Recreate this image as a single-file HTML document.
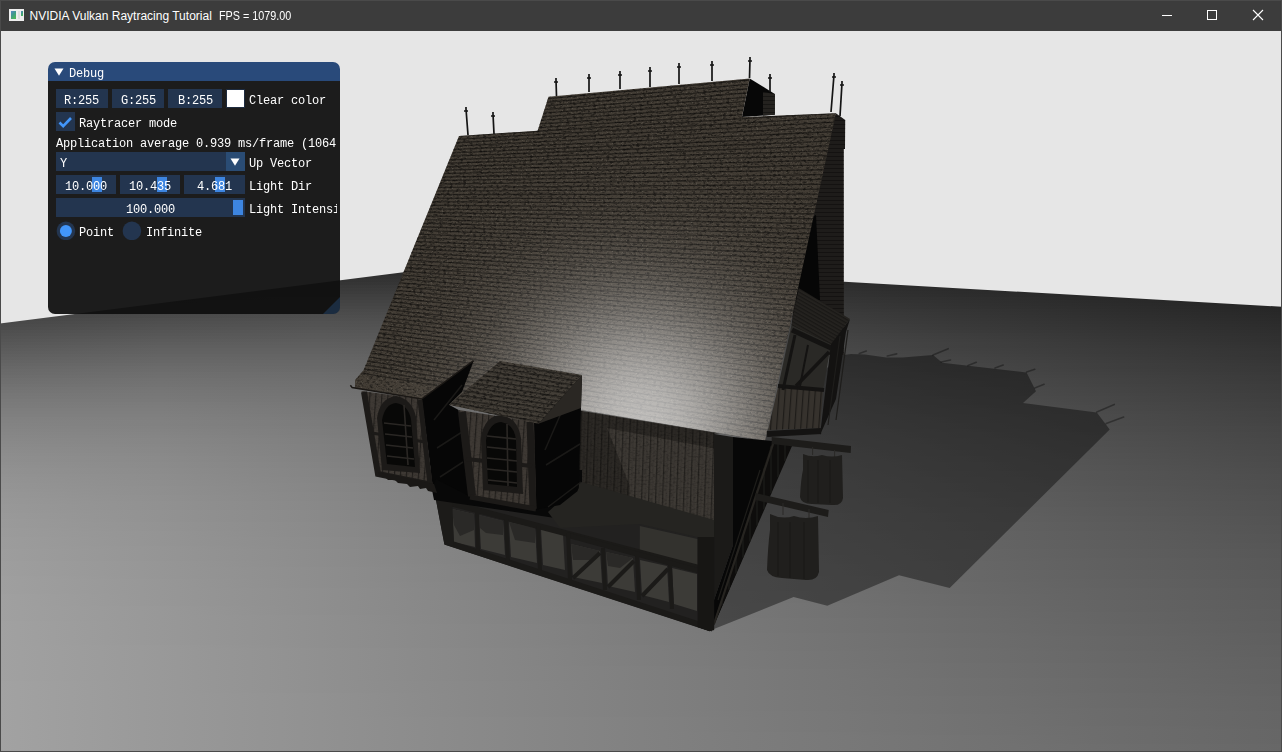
<!DOCTYPE html>
<html><head><meta charset="utf-8">
<style>
html,body{margin:0;padding:0;width:1282px;height:752px;overflow:hidden;background:#e6e6e6;position:relative;}
#floor{position:absolute;left:0;top:0;width:1282px;height:752px;clip-path:polygon(0px 323.6px,488px 261.5px,1282px 306.7px,1282px 752px,0px 752px);}
#floor i{position:absolute;left:0;width:1282px;height:3px;display:block;}
#scene{position:absolute;left:0;top:0;}
#titlebar{position:absolute;left:0;top:0;width:1282px;height:31px;background:#3c3c3c;}
#title,#title2{position:absolute;left:29.5px;top:10px;color:#fff;font:12px/13px "Liberation Sans",sans-serif;white-space:pre;}
#title2{left:218.5px;transform:scaleX(0.9);transform-origin:0 0;}
.tb{position:absolute;}
#border{position:absolute;left:0;top:0;width:1280px;height:750px;border:1px solid #4a4a4a;pointer-events:none;}
#panel{position:absolute;left:48px;top:62px;width:292px;height:252px;border-radius:7px;overflow:hidden;will-change:transform;font:12px/13px "Liberation Mono",monospace;letter-spacing:-0.2px;color:#fff;}
#panel .tbar{position:absolute;left:0;top:0;width:292px;height:19px;background:#294a7a;}
#panel .body{position:absolute;left:0;top:19px;width:292px;height:233px;background:rgba(15,15,15,0.94);}
.fr{position:absolute;height:19px;background:rgba(41,74,122,0.54);}
.t{position:absolute;white-space:pre;}
.grab{position:absolute;background:#3d85e0;}
</style></head>
<body>
<div id="floor">
<i style="top:258px;background:linear-gradient(90deg,#1a1a1a,#1e1e1e,#222222,#242424,#232323,#202020,#1c1c1c,#181818,#151515)"></i>
<i style="top:261px;background:linear-gradient(90deg,#1c1c1c,#212121,#252525,#272727,#252525,#222222,#1d1d1d,#191919,#161616)"></i>
<i style="top:264px;background:linear-gradient(90deg,#1e1e1e,#232323,#272727,#292929,#272727,#242424,#1f1f1f,#1b1b1b,#171717)"></i>
<i style="top:267px;background:linear-gradient(90deg,#202020,#252525,#292929,#2b2b2b,#2a2a2a,#252525,#202020,#1c1c1c,#181818)"></i>
<i style="top:270px;background:linear-gradient(90deg,#222222,#282828,#2c2c2c,#2e2e2e,#2c2c2c,#272727,#222222,#1d1d1d,#191919)"></i>
<i style="top:273px;background:linear-gradient(90deg,#252525,#2a2a2a,#2e2e2e,#303030,#2e2e2e,#292929,#242424,#1f1f1f,#1a1a1a)"></i>
<i style="top:276px;background:linear-gradient(90deg,#272727,#2c2c2c,#313131,#323232,#303030,#2b2b2b,#252525,#202020,#1c1c1c)"></i>
<i style="top:279px;background:linear-gradient(90deg,#292929,#2f2f2f,#333333,#343434,#323232,#2c2c2c,#262626,#212121,#1d1d1d)"></i>
<i style="top:282px;background:linear-gradient(90deg,#2b2b2b,#313131,#353535,#363636,#333333,#2e2e2e,#282828,#222222,#1e1e1e)"></i>
<i style="top:285px;background:linear-gradient(90deg,#2d2d2d,#333333,#383838,#393939,#353535,#303030,#292929,#242424,#1f1f1f)"></i>
<i style="top:288px;background:linear-gradient(90deg,#2f2f2f,#363636,#3a3a3a,#3b3b3b,#373737,#313131,#2b2b2b,#252525,#202020)"></i>
<i style="top:291px;background:linear-gradient(90deg,#323232,#383838,#3c3c3c,#3d3d3d,#393939,#333333,#2c2c2c,#262626,#212121)"></i>
<i style="top:294px;background:linear-gradient(90deg,#343434,#3a3a3a,#3f3f3f,#3f3f3f,#3b3b3b,#343434,#2d2d2d,#272727,#222222)"></i>
<i style="top:297px;background:linear-gradient(90deg,#363636,#3d3d3d,#414141,#414141,#3c3c3c,#363636,#2f2f2f,#282828,#232323)"></i>
<i style="top:300px;background:linear-gradient(90deg,#383838,#3f3f3f,#434343,#434343,#3e3e3e,#373737,#303030,#2a2a2a,#242424)"></i>
<i style="top:303px;background:linear-gradient(90deg,#3b3b3b,#414141,#454545,#454545,#404040,#393939,#313131,#2b2b2b,#252525)"></i>
<i style="top:306px;background:linear-gradient(90deg,#3d3d3d,#444444,#474747,#474747,#414141,#3a3a3a,#323232,#2c2c2c,#262626)"></i>
<i style="top:309px;background:linear-gradient(90deg,#3f3f3f,#464646,#4a4a4a,#484848,#434343,#3b3b3b,#343434,#2d2d2d,#272727)"></i>
<i style="top:312px;background:linear-gradient(90deg,#414141,#484848,#4c4c4c,#4a4a4a,#444444,#3d3d3d,#353535,#2e2e2e,#282828)"></i>
<i style="top:315px;background:linear-gradient(90deg,#444444,#4a4a4a,#4e4e4e,#4c4c4c,#464646,#3e3e3e,#363636,#2f2f2f,#292929)"></i>
<i style="top:318px;background:linear-gradient(90deg,#464646,#4d4d4d,#505050,#4d4d4d,#474747,#3f3f3f,#373737,#303030,#2a2a2a)"></i>
<i style="top:321px;background:linear-gradient(90deg,#484848,#4f4f4f,#525252,#4f4f4f,#494949,#404040,#383838,#313131,#2b2b2b)"></i>
<i style="top:324px;background:linear-gradient(90deg,#4a4a4a,#515151,#535353,#515151,#4a4a4a,#424242,#393939,#323232,#2c2c2c)"></i>
<i style="top:327px;background:linear-gradient(90deg,#4c4c4c,#535353,#555555,#525252,#4b4b4b,#434343,#3a3a3a,#333333,#2d2d2d)"></i>
<i style="top:330px;background:linear-gradient(90deg,#4f4f4f,#555555,#575757,#545454,#4d4d4d,#444444,#3b3b3b,#343434,#2e2e2e)"></i>
<i style="top:333px;background:linear-gradient(90deg,#515151,#575757,#595959,#555555,#4e4e4e,#454545,#3d3d3d,#353535,#2f2f2f)"></i>
<i style="top:336px;background:linear-gradient(90deg,#535353,#595959,#5a5a5a,#575757,#4f4f4f,#464646,#3e3e3e,#363636,#303030)"></i>
<i style="top:339px;background:linear-gradient(90deg,#555555,#5b5b5b,#5c5c5c,#585858,#505050,#474747,#3f3f3f,#373737,#303030)"></i>
<i style="top:342px;background:linear-gradient(90deg,#575757,#5d5d5d,#5e5e5e,#595959,#515151,#484848,#404040,#383838,#313131)"></i>
<i style="top:345px;background:linear-gradient(90deg,#595959,#5f5f5f,#5f5f5f,#5b5b5b,#535353,#494949,#404040,#393939,#323232)"></i>
<i style="top:348px;background:linear-gradient(90deg,#5b5b5b,#616161,#616161,#5c5c5c,#545454,#4a4a4a,#414141,#3a3a3a,#333333)"></i>
<i style="top:351px;background:linear-gradient(90deg,#5d5d5d,#626262,#626262,#5d5d5d,#555555,#4b4b4b,#424242,#3a3a3a,#343434)"></i>
<i style="top:354px;background:linear-gradient(90deg,#5f5f5f,#646464,#646464,#5e5e5e,#565656,#4c4c4c,#434343,#3b3b3b,#343434)"></i>
<i style="top:357px;background:linear-gradient(90deg,#616161,#666666,#656565,#606060,#575757,#4d4d4d,#444444,#3c3c3c,#353535)"></i>
<i style="top:360px;background:linear-gradient(90deg,#636363,#676767,#676767,#616161,#585858,#4e4e4e,#454545,#3d3d3d,#363636)"></i>
<i style="top:363px;background:linear-gradient(90deg,#656565,#696969,#686868,#626262,#595959,#4f4f4f,#464646,#3e3e3e,#373737)"></i>
<i style="top:366px;background:linear-gradient(90deg,#676767,#6b6b6b,#696969,#636363,#5a5a5a,#505050,#474747,#3e3e3e,#383838)"></i>
<i style="top:369px;background:linear-gradient(90deg,#696969,#6c6c6c,#6a6a6a,#646464,#5b5b5b,#515151,#474747,#3f3f3f,#383838)"></i>
<i style="top:372px;background:linear-gradient(90deg,#6a6a6a,#6e6e6e,#6c6c6c,#656565,#5c5c5c,#525252,#484848,#404040,#393939)"></i>
<i style="top:375px;background:linear-gradient(90deg,#6c6c6c,#6f6f6f,#6d6d6d,#666666,#5c5c5c,#525252,#494949,#414141,#3a3a3a)"></i>
<i style="top:378px;background:linear-gradient(90deg,#6e6e6e,#717171,#6e6e6e,#676767,#5d5d5d,#535353,#4a4a4a,#424242,#3a3a3a)"></i>
<i style="top:381px;background:linear-gradient(90deg,#6f6f6f,#727272,#6f6f6f,#686868,#5e5e5e,#545454,#4b4b4b,#424242,#3b3b3b)"></i>
<i style="top:384px;background:linear-gradient(90deg,#717171,#737373,#707070,#696969,#5f5f5f,#555555,#4b4b4b,#434343,#3c3c3c)"></i>
<i style="top:387px;background:linear-gradient(90deg,#737373,#757575,#717171,#6a6a6a,#606060,#565656,#4c4c4c,#444444,#3c3c3c)"></i>
<i style="top:390px;background:linear-gradient(90deg,#747474,#767676,#727272,#6a6a6a,#606060,#565656,#4d4d4d,#444444,#3d3d3d)"></i>
<i style="top:393px;background:linear-gradient(90deg,#767676,#777777,#737373,#6b6b6b,#616161,#575757,#4d4d4d,#454545,#3e3e3e)"></i>
<i style="top:396px;background:linear-gradient(90deg,#777777,#787878,#747474,#6c6c6c,#626262,#585858,#4e4e4e,#464646,#3e3e3e)"></i>
<i style="top:399px;background:linear-gradient(90deg,#797979,#797979,#757575,#6d6d6d,#636363,#585858,#4f4f4f,#464646,#3f3f3f)"></i>
<i style="top:402px;background:linear-gradient(90deg,#7a7a7a,#7b7b7b,#767676,#6e6e6e,#636363,#595959,#4f4f4f,#474747,#404040)"></i>
<i style="top:405px;background:linear-gradient(90deg,#7b7b7b,#7c7c7c,#777777,#6e6e6e,#646464,#5a5a5a,#505050,#484848,#404040)"></i>
<i style="top:408px;background:linear-gradient(90deg,#7d7d7d,#7d7d7d,#787878,#6f6f6f,#656565,#5a5a5a,#515151,#484848,#414141)"></i>
<i style="top:411px;background:linear-gradient(90deg,#7e7e7e,#7e7e7e,#787878,#707070,#656565,#5b5b5b,#515151,#494949,#424242)"></i>
<i style="top:414px;background:linear-gradient(90deg,#7f7f7f,#7f7f7f,#797979,#707070,#666666,#5c5c5c,#525252,#4a4a4a,#424242)"></i>
<i style="top:417px;background:linear-gradient(90deg,#818181,#808080,#7a7a7a,#717171,#676767,#5c5c5c,#535353,#4a4a4a,#434343)"></i>
<i style="top:420px;background:linear-gradient(90deg,#828282,#818181,#7b7b7b,#727272,#676767,#5d5d5d,#535353,#4b4b4b,#434343)"></i>
<i style="top:423px;background:linear-gradient(90deg,#838383,#818181,#7b7b7b,#727272,#686868,#5d5d5d,#545454,#4b4b4b,#444444)"></i>
<i style="top:426px;background:linear-gradient(90deg,#848484,#828282,#7c7c7c,#737373,#686868,#5e5e5e,#545454,#4c4c4c,#454545)"></i>
<i style="top:429px;background:linear-gradient(90deg,#858585,#838383,#7d7d7d,#737373,#696969,#5f5f5f,#555555,#4c4c4c,#454545)"></i>
<i style="top:432px;background:linear-gradient(90deg,#868686,#848484,#7d7d7d,#747474,#696969,#5f5f5f,#565656,#4d4d4d,#464646)"></i>
<i style="top:435px;background:linear-gradient(90deg,#878787,#858585,#7e7e7e,#747474,#6a6a6a,#606060,#565656,#4e4e4e,#464646)"></i>
<i style="top:438px;background:linear-gradient(90deg,#888888,#868686,#7f7f7f,#757575,#6a6a6a,#606060,#575757,#4e4e4e,#474747)"></i>
<i style="top:441px;background:linear-gradient(90deg,#898989,#868686,#7f7f7f,#767676,#6b6b6b,#616161,#575757,#4f4f4f,#474747)"></i>
<i style="top:444px;background:linear-gradient(90deg,#8a8a8a,#878787,#808080,#767676,#6b6b6b,#616161,#585858,#4f4f4f,#484848)"></i>
<i style="top:447px;background:linear-gradient(90deg,#8b8b8b,#888888,#808080,#777777,#6c6c6c,#626262,#585858,#505050,#484848)"></i>
<i style="top:450px;background:linear-gradient(90deg,#8c8c8c,#888888,#818181,#777777,#6c6c6c,#626262,#595959,#505050,#494949)"></i>
<i style="top:453px;background:linear-gradient(90deg,#8d8d8d,#898989,#818181,#777777,#6d6d6d,#636363,#595959,#515151,#494949)"></i>
<i style="top:456px;background:linear-gradient(90deg,#8e8e8e,#8a8a8a,#828282,#787878,#6d6d6d,#636363,#5a5a5a,#515151,#4a4a4a)"></i>
<i style="top:459px;background:linear-gradient(90deg,#8e8e8e,#8a8a8a,#828282,#787878,#6e6e6e,#646464,#5a5a5a,#525252,#4a4a4a)"></i>
<i style="top:462px;background:linear-gradient(90deg,#8f8f8f,#8b8b8b,#838383,#797979,#6e6e6e,#646464,#5b5b5b,#525252,#4b4b4b)"></i>
<i style="top:465px;background:linear-gradient(90deg,#909090,#8b8b8b,#838383,#797979,#6f6f6f,#646464,#5b5b5b,#535353,#4b4b4b)"></i>
<i style="top:468px;background:linear-gradient(90deg,#919191,#8c8c8c,#848484,#7a7a7a,#6f6f6f,#656565,#5b5b5b,#535353,#4c4c4c)"></i>
<i style="top:471px;background:linear-gradient(90deg,#919191,#8c8c8c,#848484,#7a7a7a,#6f6f6f,#656565,#5c5c5c,#545454,#4c4c4c)"></i>
<i style="top:474px;background:linear-gradient(90deg,#929292,#8d8d8d,#848484,#7a7a7a,#707070,#666666,#5c5c5c,#545454,#4d4d4d)"></i>
<i style="top:477px;background:linear-gradient(90deg,#939393,#8d8d8d,#858585,#7b7b7b,#707070,#666666,#5d5d5d,#545454,#4d4d4d)"></i>
<i style="top:480px;background:linear-gradient(90deg,#939393,#8e8e8e,#858585,#7b7b7b,#717171,#676767,#5d5d5d,#555555,#4e4e4e)"></i>
<i style="top:483px;background:linear-gradient(90deg,#949494,#8e8e8e,#868686,#7c7c7c,#717171,#676767,#5e5e5e,#555555,#4e4e4e)"></i>
<i style="top:486px;background:linear-gradient(90deg,#949494,#8f8f8f,#868686,#7c7c7c,#717171,#676767,#5e5e5e,#565656,#4e4e4e)"></i>
<i style="top:489px;background:linear-gradient(90deg,#959595,#8f8f8f,#868686,#7c7c7c,#727272,#686868,#5e5e5e,#565656,#4f4f4f)"></i>
<i style="top:492px;background:linear-gradient(90deg,#969696,#8f8f8f,#878787,#7d7d7d,#727272,#686868,#5f5f5f,#575757,#4f4f4f)"></i>
<i style="top:495px;background:linear-gradient(90deg,#969696,#909090,#878787,#7d7d7d,#727272,#686868,#5f5f5f,#575757,#505050)"></i>
<i style="top:498px;background:linear-gradient(90deg,#979797,#909090,#878787,#7d7d7d,#737373,#696969,#606060,#575757,#505050)"></i>
<i style="top:501px;background:linear-gradient(90deg,#979797,#919191,#888888,#7d7d7d,#737373,#696969,#606060,#585858,#515151)"></i>
<i style="top:504px;background:linear-gradient(90deg,#989898,#919191,#888888,#7e7e7e,#737373,#6a6a6a,#606060,#585858,#515151)"></i>
<i style="top:507px;background:linear-gradient(90deg,#989898,#919191,#888888,#7e7e7e,#747474,#6a6a6a,#616161,#595959,#515151)"></i>
<i style="top:510px;background:linear-gradient(90deg,#989898,#929292,#898989,#7e7e7e,#747474,#6a6a6a,#616161,#595959,#525252)"></i>
<i style="top:513px;background:linear-gradient(90deg,#999999,#929292,#898989,#7f7f7f,#747474,#6b6b6b,#626262,#595959,#525252)"></i>
<i style="top:516px;background:linear-gradient(90deg,#999999,#929292,#898989,#7f7f7f,#757575,#6b6b6b,#626262,#5a5a5a,#535353)"></i>
<i style="top:519px;background:linear-gradient(90deg,#9a9a9a,#929292,#898989,#7f7f7f,#757575,#6b6b6b,#626262,#5a5a5a,#535353)"></i>
<i style="top:522px;background:linear-gradient(90deg,#9a9a9a,#939393,#8a8a8a,#7f7f7f,#757575,#6c6c6c,#636363,#5b5b5b,#535353)"></i>
<i style="top:525px;background:linear-gradient(90deg,#9a9a9a,#939393,#8a8a8a,#808080,#767676,#6c6c6c,#636363,#5b5b5b,#545454)"></i>
<i style="top:528px;background:linear-gradient(90deg,#9b9b9b,#939393,#8a8a8a,#808080,#767676,#6c6c6c,#636363,#5b5b5b,#545454)"></i>
<i style="top:531px;background:linear-gradient(90deg,#9b9b9b,#949494,#8a8a8a,#808080,#767676,#6c6c6c,#646464,#5c5c5c,#545454)"></i>
<i style="top:534px;background:linear-gradient(90deg,#9b9b9b,#949494,#8a8a8a,#808080,#767676,#6d6d6d,#646464,#5c5c5c,#555555)"></i>
<i style="top:537px;background:linear-gradient(90deg,#9c9c9c,#949494,#8b8b8b,#818181,#777777,#6d6d6d,#646464,#5c5c5c,#555555)"></i>
<i style="top:540px;background:linear-gradient(90deg,#9c9c9c,#949494,#8b8b8b,#818181,#777777,#6d6d6d,#656565,#5d5d5d,#555555)"></i>
<i style="top:543px;background:linear-gradient(90deg,#9c9c9c,#949494,#8b8b8b,#818181,#777777,#6e6e6e,#656565,#5d5d5d,#565656)"></i>
<i style="top:546px;background:linear-gradient(90deg,#9c9c9c,#959595,#8b8b8b,#818181,#777777,#6e6e6e,#656565,#5d5d5d,#565656)"></i>
<i style="top:549px;background:linear-gradient(90deg,#9d9d9d,#959595,#8c8c8c,#828282,#787878,#6e6e6e,#666666,#5e5e5e,#575757)"></i>
<i style="top:552px;background:linear-gradient(90deg,#9d9d9d,#959595,#8c8c8c,#828282,#787878,#6e6e6e,#666666,#5e5e5e,#575757)"></i>
<i style="top:555px;background:linear-gradient(90deg,#9d9d9d,#959595,#8c8c8c,#828282,#787878,#6f6f6f,#666666,#5e5e5e,#575757)"></i>
<i style="top:558px;background:linear-gradient(90deg,#9d9d9d,#959595,#8c8c8c,#828282,#787878,#6f6f6f,#666666,#5f5f5f,#585858)"></i>
<i style="top:561px;background:linear-gradient(90deg,#9e9e9e,#969696,#8c8c8c,#828282,#797979,#6f6f6f,#676767,#5f5f5f,#585858)"></i>
<i style="top:564px;background:linear-gradient(90deg,#9e9e9e,#969696,#8c8c8c,#838383,#797979,#707070,#676767,#5f5f5f,#585858)"></i>
<i style="top:567px;background:linear-gradient(90deg,#9e9e9e,#969696,#8d8d8d,#838383,#797979,#707070,#676767,#5f5f5f,#585858)"></i>
<i style="top:570px;background:linear-gradient(90deg,#9e9e9e,#969696,#8d8d8d,#838383,#797979,#707070,#686868,#606060,#595959)"></i>
<i style="top:573px;background:linear-gradient(90deg,#9e9e9e,#969696,#8d8d8d,#838383,#797979,#707070,#686868,#606060,#595959)"></i>
<i style="top:576px;background:linear-gradient(90deg,#9f9f9f,#969696,#8d8d8d,#838383,#7a7a7a,#717171,#686868,#606060,#595959)"></i>
<i style="top:579px;background:linear-gradient(90deg,#9f9f9f,#979797,#8d8d8d,#838383,#7a7a7a,#717171,#686868,#616161,#5a5a5a)"></i>
<i style="top:582px;background:linear-gradient(90deg,#9f9f9f,#979797,#8d8d8d,#848484,#7a7a7a,#717171,#696969,#616161,#5a5a5a)"></i>
<i style="top:585px;background:linear-gradient(90deg,#9f9f9f,#979797,#8d8d8d,#848484,#7a7a7a,#717171,#696969,#616161,#5a5a5a)"></i>
<i style="top:588px;background:linear-gradient(90deg,#9f9f9f,#979797,#8e8e8e,#848484,#7a7a7a,#717171,#696969,#626262,#5b5b5b)"></i>
<i style="top:591px;background:linear-gradient(90deg,#9f9f9f,#979797,#8e8e8e,#848484,#7b7b7b,#727272,#696969,#626262,#5b5b5b)"></i>
<i style="top:594px;background:linear-gradient(90deg,#a0a0a0,#979797,#8e8e8e,#848484,#7b7b7b,#727272,#6a6a6a,#626262,#5b5b5b)"></i>
<i style="top:597px;background:linear-gradient(90deg,#a0a0a0,#979797,#8e8e8e,#848484,#7b7b7b,#727272,#6a6a6a,#626262,#5b5b5b)"></i>
<i style="top:600px;background:linear-gradient(90deg,#a0a0a0,#979797,#8e8e8e,#858585,#7b7b7b,#727272,#6a6a6a,#636363,#5c5c5c)"></i>
<i style="top:603px;background:linear-gradient(90deg,#a0a0a0,#979797,#8e8e8e,#858585,#7b7b7b,#737373,#6a6a6a,#636363,#5c5c5c)"></i>
<i style="top:606px;background:linear-gradient(90deg,#a0a0a0,#989898,#8e8e8e,#858585,#7c7c7c,#737373,#6b6b6b,#636363,#5c5c5c)"></i>
<i style="top:609px;background:linear-gradient(90deg,#a0a0a0,#989898,#8e8e8e,#858585,#7c7c7c,#737373,#6b6b6b,#636363,#5d5d5d)"></i>
<i style="top:612px;background:linear-gradient(90deg,#a0a0a0,#989898,#8e8e8e,#858585,#7c7c7c,#737373,#6b6b6b,#646464,#5d5d5d)"></i>
<i style="top:615px;background:linear-gradient(90deg,#a0a0a0,#989898,#8f8f8f,#858585,#7c7c7c,#737373,#6b6b6b,#646464,#5d5d5d)"></i>
<i style="top:618px;background:linear-gradient(90deg,#a0a0a0,#989898,#8f8f8f,#858585,#7c7c7c,#747474,#6c6c6c,#646464,#5d5d5d)"></i>
<i style="top:621px;background:linear-gradient(90deg,#a1a1a1,#989898,#8f8f8f,#858585,#7c7c7c,#747474,#6c6c6c,#646464,#5e5e5e)"></i>
<i style="top:624px;background:linear-gradient(90deg,#a1a1a1,#989898,#8f8f8f,#868686,#7d7d7d,#747474,#6c6c6c,#656565,#5e5e5e)"></i>
<i style="top:627px;background:linear-gradient(90deg,#a1a1a1,#989898,#8f8f8f,#868686,#7d7d7d,#747474,#6c6c6c,#656565,#5e5e5e)"></i>
<i style="top:630px;background:linear-gradient(90deg,#a1a1a1,#989898,#8f8f8f,#868686,#7d7d7d,#747474,#6c6c6c,#656565,#5e5e5e)"></i>
<i style="top:633px;background:linear-gradient(90deg,#a1a1a1,#989898,#8f8f8f,#868686,#7d7d7d,#757575,#6d6d6d,#656565,#5f5f5f)"></i>
<i style="top:636px;background:linear-gradient(90deg,#a1a1a1,#989898,#8f8f8f,#868686,#7d7d7d,#757575,#6d6d6d,#666666,#5f5f5f)"></i>
<i style="top:639px;background:linear-gradient(90deg,#a1a1a1,#989898,#8f8f8f,#868686,#7d7d7d,#757575,#6d6d6d,#666666,#5f5f5f)"></i>
<i style="top:642px;background:linear-gradient(90deg,#a1a1a1,#989898,#8f8f8f,#868686,#7d7d7d,#757575,#6d6d6d,#666666,#5f5f5f)"></i>
<i style="top:645px;background:linear-gradient(90deg,#a1a1a1,#999999,#8f8f8f,#868686,#7e7e7e,#757575,#6d6d6d,#666666,#606060)"></i>
<i style="top:648px;background:linear-gradient(90deg,#a1a1a1,#999999,#909090,#878787,#7e7e7e,#757575,#6e6e6e,#666666,#606060)"></i>
<i style="top:651px;background:linear-gradient(90deg,#a1a1a1,#999999,#909090,#878787,#7e7e7e,#767676,#6e6e6e,#676767,#606060)"></i>
<i style="top:654px;background:linear-gradient(90deg,#a1a1a1,#999999,#909090,#878787,#7e7e7e,#767676,#6e6e6e,#676767,#606060)"></i>
<i style="top:657px;background:linear-gradient(90deg,#a1a1a1,#999999,#909090,#878787,#7e7e7e,#767676,#6e6e6e,#676767,#616161)"></i>
<i style="top:660px;background:linear-gradient(90deg,#a1a1a1,#999999,#909090,#878787,#7e7e7e,#767676,#6e6e6e,#676767,#616161)"></i>
<i style="top:663px;background:linear-gradient(90deg,#a1a1a1,#999999,#909090,#878787,#7e7e7e,#767676,#6f6f6f,#686868,#616161)"></i>
<i style="top:666px;background:linear-gradient(90deg,#a1a1a1,#999999,#909090,#878787,#7f7f7f,#767676,#6f6f6f,#686868,#616161)"></i>
<i style="top:669px;background:linear-gradient(90deg,#a1a1a1,#999999,#909090,#878787,#7f7f7f,#777777,#6f6f6f,#686868,#626262)"></i>
<i style="top:672px;background:linear-gradient(90deg,#a1a1a1,#999999,#909090,#878787,#7f7f7f,#777777,#6f6f6f,#686868,#626262)"></i>
<i style="top:675px;background:linear-gradient(90deg,#a1a1a1,#999999,#909090,#878787,#7f7f7f,#777777,#6f6f6f,#686868,#626262)"></i>
<i style="top:678px;background:linear-gradient(90deg,#a1a1a1,#999999,#909090,#878787,#7f7f7f,#777777,#707070,#696969,#626262)"></i>
<i style="top:681px;background:linear-gradient(90deg,#a2a2a2,#999999,#909090,#888888,#7f7f7f,#777777,#707070,#696969,#626262)"></i>
<i style="top:684px;background:linear-gradient(90deg,#a2a2a2,#999999,#909090,#888888,#7f7f7f,#777777,#707070,#696969,#636363)"></i>
<i style="top:687px;background:linear-gradient(90deg,#a2a2a2,#999999,#909090,#888888,#7f7f7f,#777777,#707070,#696969,#636363)"></i>
<i style="top:690px;background:linear-gradient(90deg,#a2a2a2,#999999,#909090,#888888,#808080,#787878,#707070,#696969,#636363)"></i>
<i style="top:693px;background:linear-gradient(90deg,#a2a2a2,#999999,#919191,#888888,#808080,#787878,#707070,#6a6a6a,#636363)"></i>
<i style="top:696px;background:linear-gradient(90deg,#a2a2a2,#999999,#919191,#888888,#808080,#787878,#717171,#6a6a6a,#646464)"></i>
<i style="top:699px;background:linear-gradient(90deg,#a2a2a2,#999999,#919191,#888888,#808080,#787878,#717171,#6a6a6a,#646464)"></i>
<i style="top:702px;background:linear-gradient(90deg,#a2a2a2,#999999,#919191,#888888,#808080,#787878,#717171,#6a6a6a,#646464)"></i>
<i style="top:705px;background:linear-gradient(90deg,#a2a2a2,#999999,#919191,#888888,#808080,#787878,#717171,#6a6a6a,#646464)"></i>
<i style="top:708px;background:linear-gradient(90deg,#a2a2a2,#999999,#919191,#888888,#808080,#787878,#717171,#6b6b6b,#646464)"></i>
<i style="top:711px;background:linear-gradient(90deg,#a2a2a2,#999999,#919191,#888888,#808080,#797979,#717171,#6b6b6b,#656565)"></i>
<i style="top:714px;background:linear-gradient(90deg,#a2a2a2,#999999,#919191,#888888,#808080,#797979,#727272,#6b6b6b,#656565)"></i>
<i style="top:717px;background:linear-gradient(90deg,#a2a2a2,#999999,#919191,#898989,#818181,#797979,#727272,#6b6b6b,#656565)"></i>
<i style="top:720px;background:linear-gradient(90deg,#a2a2a2,#999999,#919191,#898989,#818181,#797979,#727272,#6b6b6b,#656565)"></i>
<i style="top:723px;background:linear-gradient(90deg,#a2a2a2,#999999,#919191,#898989,#818181,#797979,#727272,#6b6b6b,#656565)"></i>
<i style="top:726px;background:linear-gradient(90deg,#a2a2a2,#999999,#919191,#898989,#818181,#797979,#727272,#6c6c6c,#656565)"></i>
<i style="top:729px;background:linear-gradient(90deg,#a2a2a2,#999999,#919191,#898989,#818181,#797979,#727272,#6c6c6c,#666666)"></i>
<i style="top:732px;background:linear-gradient(90deg,#a2a2a2,#999999,#919191,#898989,#818181,#7a7a7a,#727272,#6c6c6c,#666666)"></i>
<i style="top:735px;background:linear-gradient(90deg,#a2a2a2,#999999,#919191,#898989,#818181,#7a7a7a,#737373,#6c6c6c,#666666)"></i>
<i style="top:738px;background:linear-gradient(90deg,#a2a2a2,#999999,#919191,#898989,#818181,#7a7a7a,#737373,#6c6c6c,#666666)"></i>
<i style="top:741px;background:linear-gradient(90deg,#a2a2a2,#999999,#919191,#898989,#818181,#7a7a7a,#737373,#6c6c6c,#666666)"></i>
<i style="top:744px;background:linear-gradient(90deg,#a2a2a2,#999999,#919191,#898989,#818181,#7a7a7a,#737373,#6d6d6d,#676767)"></i>
<i style="top:747px;background:linear-gradient(90deg,#a2a2a2,#999999,#919191,#898989,#818181,#7a7a7a,#737373,#6d6d6d,#676767)"></i>
<i style="top:750px;background:linear-gradient(90deg,#a1a1a1,#999999,#919191,#898989,#828282,#7a7a7a,#737373,#6d6d6d,#676767)"></i>
</div>
<svg id="scene" width="1282" height="752" viewBox="0 0 1282 752">
<defs>
  <radialGradient id="spec" gradientUnits="userSpaceOnUse" cx="640.2" cy="429.6" r="320" gradientTransform="translate(640.2 429.6) rotate(28.0) scale(1.024 0.976) translate(-640.2 -429.6)">
<stop offset="0" stop-color="#fff" stop-opacity="0.667"/>
<stop offset="0.0625" stop-color="#fff" stop-opacity="0.655"/>
<stop offset="0.125" stop-color="#fff" stop-opacity="0.616"/>
<stop offset="0.1875" stop-color="#fff" stop-opacity="0.552"/>
<stop offset="0.25" stop-color="#fff" stop-opacity="0.470"/>
<stop offset="0.3125" stop-color="#fff" stop-opacity="0.380"/>
<stop offset="0.375" stop-color="#fff" stop-opacity="0.291"/>
<stop offset="0.4375" stop-color="#fff" stop-opacity="0.211"/>
<stop offset="0.5" stop-color="#fff" stop-opacity="0.144"/>
<stop offset="0.5625" stop-color="#fff" stop-opacity="0.093"/>
<stop offset="0.625" stop-color="#fff" stop-opacity="0.057"/>
<stop offset="0.6875" stop-color="#fff" stop-opacity="0.033"/>
<stop offset="0.75" stop-color="#fff" stop-opacity="0.018"/>
<stop offset="0.8125" stop-color="#fff" stop-opacity="0.009"/>
<stop offset="0.875" stop-color="#fff" stop-opacity="0.004"/>
<stop offset="0.9375" stop-color="#fff" stop-opacity="0.002"/>
<stop offset="1" stop-color="#fff" stop-opacity="0.001"/>
</radialGradient>
  <filter id="grain" x="0" y="0" width="100%" height="100%" filterUnits="objectBoundingBox">
    <feTurbulence type="fractalNoise" baseFrequency="0.3 0.55" numOctaves="3" seed="7" result="n"/>
    <feColorMatrix in="n" type="matrix" values="0 0 0 0 0  0 0 0 0 0  0 0 0 0 0  0 0 0 -3 1.6" result="a"/>
    <feComposite in="a" in2="SourceGraphic" operator="in"/>
  </filter>
  <filter id="grainL" x="0" y="0" width="100%" height="100%" filterUnits="objectBoundingBox">
    <feTurbulence type="fractalNoise" baseFrequency="0.8 1.0" numOctaves="1" seed="11" result="n"/>
    <feColorMatrix in="n" type="matrix" values="0 0 0 0 0.85  0 0 0 0 0.8  0 0 0 0 0.68  0 0 0 4 -2.3" result="a"/>
    <feComposite in="a" in2="SourceGraphic" operator="in"/>
  </filter>
  <pattern id="shingleS" patternUnits="userSpaceOnUse" width="60" height="4.6" patternTransform="rotate(9)">
    <rect x="0" y="0" width="60" height="1.4" fill="#000" fill-opacity="0.45"/>
  </pattern>
  <pattern id="shingleB" patternUnits="userSpaceOnUse" width="60" height="3.2" patternTransform="rotate(30)">
    <rect x="0" y="0" width="60" height="1.2" fill="#000" fill-opacity="0.3"/>
  </pattern>
  <pattern id="planks" patternUnits="userSpaceOnUse" width="7" height="60" patternTransform="rotate(2)">
    <rect x="0" y="0" width="1.3" height="60" fill="#000" fill-opacity="0.4"/>
    <rect x="3.5" y="0" width="1" height="60" fill="#000" fill-opacity="0.12"/>
  </pattern>
  <pattern id="planksD" patternUnits="userSpaceOnUse" width="6" height="60" patternTransform="rotate(4)">
    <rect x="0" y="0" width="1.2" height="60" fill="#000" fill-opacity="0.45"/>
  </pattern>
  <pattern id="bricks" patternUnits="userSpaceOnUse" width="8" height="4">
    <rect x="0" y="0" width="8" height="1" fill="#000" fill-opacity="0.35"/>
  </pattern>
  <clipPath id="roofClip"><polygon points="459,136 537.6,130.7 548.5,96.7 749.7,78.5 742,117 835.9,113.3 765,441 577.6,409.6 538,424 449,404.7 421.6,399 352.2,387.6 350.4,385.2 363.5,370.3"/></clipPath>
</defs>

<!-- shadow on floor (multiply ~0.6) -->
<polygon fill="#000" fill-opacity="0.4" points="710.2,630.6 793.6,597 827.3,605.8 899,575.2 949.7,588 1109.7,429.5 1096.8,412.4 1023,403 1036,391.3 1026.6,372.6 942.3,362.8 933,355 902.5,357.6 886.2,357.6 865,354.6 851,353.9 841.7,355.3 790,400 760,440 700,620"/>
<g stroke="#000" stroke-opacity="0.35" stroke-width="1.6" stroke-linecap="round">
  <line x1="859.3" y1="353.4" x2="866.3" y2="351"/>
  <line x1="887.3" y1="356" x2="896.7" y2="353.9"/>
  <line x1="933" y1="355" x2="948.2" y2="348.7"/>
  <line x1="941.2" y1="362" x2="950.5" y2="360"/>
  <line x1="968" y1="365.6" x2="976.3" y2="362.3"/>
  <line x1="995" y1="368.1" x2="1003.2" y2="365.1"/>
  <line x1="1026.6" y1="372" x2="1034.8" y2="369.3"/>
  <line x1="1034.8" y1="388" x2="1044.1" y2="384.3"/>
  <line x1="1096.8" y1="412" x2="1114.3" y2="404.4"/>
  <line x1="1106.2" y1="423.6" x2="1123.7" y2="417"/>
</g>

<!-- right gable (behind main roof) -->
<polygon fill="#1e1c1a" points="835.9,113.3 845.2,120 845,149 843.8,149 843.8,355 790,355 800,200"/>
<polygon fill="url(#bricks)" points="835.9,113.3 845.2,120 845,149 843.8,149 843.8,355 790,355 800,200"/>
<polygon fill="#060606" points="810,218 816,215 820,300 796,300"/>
<!-- upper gable -->
<polygon fill="#070707" points="749.7,78.5 774.8,94 774.8,114.8 742,117"/>
<polygon fill="#24221f" points="763,92 774.8,94 774.8,114.8 763,115.5"/>
<polygon fill="url(#bricks)" points="763,92 774.8,94 774.8,114.8 763,115.5"/>

<!-- main roof -->
<g clip-path="url(#roofClip)">
  <rect x="355" y="75" width="485" height="370" fill="#423c34"/>
  <rect x="355" y="75" width="485" height="370" fill="#000" filter="url(#grain)" opacity="0.5"/>
  <rect x="355" y="75" width="485" height="370" fill="#fff" filter="url(#grainL)" opacity="0.18"/>
  <path d="M460.6 97.2L863.1 55.7M459.2 100.6L862.1 60.4M457.8 103.9L861.1 65.1M456.4 107.2L860.1 69.8M455.0 110.5L859.0 74.5M453.7 113.8L858.0 79.2M452.3 117.1L857.0 83.9M450.9 120.4L856.0 88.6M449.5 123.7L855.0 93.3M448.1 127.0L854.0 98.0M446.8 130.3L853.0 102.7M445.4 133.6L852.0 107.4M444.0 136.9L851.0 112.1M442.6 140.2L850.0 116.8M441.2 143.5L849.0 121.5M439.8 146.9L848.0 126.2M438.5 150.2L847.0 131.0M437.1 153.6L845.9 135.7M435.7 156.9L844.9 140.5M434.2 160.3L843.9 145.3M432.8 163.7L842.9 150.1M431.4 167.1L841.8 154.9M430.0 170.5L840.8 159.8M428.6 173.9L839.8 164.6M427.1 177.3L838.7 169.5M425.7 180.7L837.7 174.4M424.3 184.2L836.6 179.3M422.8 187.7L835.6 184.2M421.4 191.1L834.5 189.1M419.9 194.6L833.4 194.1M418.5 198.1L832.4 199.0M417.0 201.6L831.3 204.0M415.5 205.1L830.3 209.0M414.1 208.6L829.2 214.0M412.6 212.2L828.1 219.0M411.1 215.7L827.0 224.0M409.6 219.3L825.9 229.1M408.1 222.8L824.9 234.2M406.7 226.4L823.8 239.2M405.2 230.0L822.7 244.3M403.7 233.6L821.6 249.4M402.1 237.2L820.5 254.6M400.6 240.8L819.4 259.7M399.1 244.5L818.3 264.9M397.6 248.1L817.2 270.0M396.1 251.8L816.1 275.2M394.5 255.4L815.0 280.4M393.0 259.1L813.8 285.6M391.5 262.8L812.7 290.9M389.9 266.5L811.6 296.1M388.4 270.2L810.5 301.4M386.8 273.9L809.3 306.7M385.3 277.7L808.2 312.0M383.7 281.4L807.1 317.3M382.2 285.2L805.9 322.6M380.6 288.9L804.8 327.9M379.0 292.7L803.6 333.3M377.4 296.5L802.5 338.6M375.9 300.3L801.3 344.0M374.3 304.1L800.2 349.4M372.7 307.9L799.0 354.8M371.1 311.7L797.8 360.3M369.5 315.6L796.7 365.7M367.9 319.4L795.5 371.2M366.3 323.3L794.3 376.6M364.7 327.2L793.2 382.1M363.0 331.0L792.0 387.6M361.4 334.9L790.8 393.2M359.8 338.8L789.6 398.7M358.1 342.8L788.4 404.2M356.5 346.7L787.2 409.8M354.9 350.6L786.0 415.4M353.2 354.6L784.8 421.0M351.6 358.5L783.6 426.6M349.9 362.5L782.4 432.2M348.3 366.5L781.2 437.9M346.6 370.5L780.0 443.5" stroke="#000" stroke-opacity="0.45" stroke-width="1.3" fill="none"/>
  <rect x="355" y="75" width="485" height="370" fill="url(#spec)"/>
</g>

<!-- right bay -->
<polygon fill="#131211" points="831,344 850,319 846,332 836,399 820,435"/>
<g stroke="#1e1d1b" stroke-width="1.2"><line x1="848" y1="330" x2="836" y2="420"/><line x1="840" y1="336" x2="828" y2="425"/></g>
<polygon fill="#2a2926" points="791.5,325 831,344 823,390 778,387"/>
<polygon fill="#36322d" points="778,387 823,390 820,428 768,430"/>
<polygon fill="url(#planksD)" points="778,387 823,390 820,428 768,430"/>
<g stroke="#141312" fill="none">
  <line x1="792" y1="330" x2="831" y2="348" stroke-width="5"/>
  <line x1="778" y1="386" x2="824" y2="390" stroke-width="4"/>
  <line x1="795" y1="335" x2="783" y2="390" stroke-width="3"/>
  <line x1="829" y1="352" x2="796" y2="386" stroke-width="3.5"/>
  <line x1="808" y1="345" x2="800" y2="386" stroke-width="2"/>
  <line x1="767" y1="434" x2="821" y2="431" stroke-width="6"/>
</g>
<polygon fill="#24221f" points="798.7,288 850,319 831,344 791.5,325"/>
<polygon fill="url(#shingleB)" points="798.7,288 850,319 831,344 791.5,325"/>

<!-- upper front wall (planks) -->
<polygon fill="#2c2925" points="577.4,410.2 719.8,433.5 714.2,433.5 714.2,522.8 577.4,491.2"/>
<polygon fill="#3d3934" points="607,428 715,448.4 714.2,522.8 629.6,503 629.6,485.6"/>
<polygon fill="url(#planks)" points="577.4,410.2 719.8,433.5 714.2,522.8 577.4,491.2"/>
<polygon fill="#000" filter="url(#grain)" opacity="0.18" points="577.4,410.2 719.8,433.5 714.2,522.8 577.4,491.2"/>

<!-- black corner & side -->
<polygon fill="#1b1a18" points="697.6,520 714,522 714,434 733,437 733,545 714,600 710,631 697.6,627"/>
<polygon fill="#070707" points="733,437 792,443 711,632 714,600 733,545"/>
<polygon fill="#0e0d0c" points="772,441 792,446 711,632 714,622"/>
<g stroke="#1d1c19" stroke-width="1.3"><line x1="722" y1="601.5" x2="722" y2="605.7"/><line x1="729" y1="579.3" x2="729" y2="589.6"/><line x1="736" y1="557.1" x2="736" y2="573.6"/><line x1="743" y1="534.9" x2="743" y2="557.5"/><line x1="750" y1="512.7" x2="750" y2="541.4"/><line x1="757" y1="490.6" x2="757" y2="525.4"/><line x1="764" y1="468.4" x2="764" y2="509.3"/><line x1="771" y1="446.2" x2="771" y2="493.2"/><line x1="778" y1="443.0" x2="778" y2="477.1"/><line x1="785" y1="443.0" x2="785" y2="461.1"/></g>
<line x1="774" y1="441" x2="714" y2="624" stroke="#262420" stroke-width="2.2"/>
<line x1="760" y1="470" x2="718" y2="600" stroke="#1e1d1a" stroke-width="1.2"/>
<!-- beam below plank wall -->
<polygon fill="#1d1c1a" points="550,484 714.2,520.5 714.2,537 550,500"/>

<!-- ground floor -->
<polygon fill="#222120" points="434,489.6 550,495 714.2,530 709.7,631.3 444.4,544.6"/>
<!-- panes -->
<g fill="#3c3b37">
  <polygon points="452,509 474,514 475,547 454,542"/>
  <polygon points="479,515 503,521 505,555 481,549"/>
  <polygon points="509,522 535,528 537,563 511,557"/>
  <polygon points="541,529 563,534 565,570 543,565"/>
  <polygon points="571,544 600,551 602,583 573,577"/>
  <polygon points="606,552 633,558 635,592 608,586"/>
  <polygon points="640,560 667,566 669,602 642,595"/>
  <polygon points="672,568 697,574 697,611 674,604"/>
  <polygon fill="#33322e" points="639.8,526 697.6,539 697.6,570.8 639.8,555.9"/>
</g>
<g fill="#2a2927">
  <polygon points="452,509 474,514 474,530 460,536 454,525"/>
  <polygon points="479,515 503,521 503,535 486,533 480,528"/>
  <polygon points="509,522 535,528 535,543 515,540"/>
  <polygon points="571,544 600,551 590,560 573,560"/>
  <polygon points="606,552 633,558 620,568 608,566"/>
</g>
<g stroke="#1b1a18" fill="none">
  <line x1="450" y1="503" x2="714" y2="572" stroke-width="6"/>
  <line x1="446" y1="542" x2="710" y2="628" stroke-width="6"/>
  <line x1="567" y1="535" x2="714" y2="575" stroke-width="5"/>
  <line x1="477" y1="512" x2="478" y2="552" stroke-width="4"/>
  <line x1="506" y1="519" x2="508" y2="561" stroke-width="4"/>
  <line x1="538" y1="526" x2="540" y2="570" stroke-width="4"/>
  <line x1="568" y1="533" x2="570" y2="580" stroke-width="4"/>
  <line x1="603" y1="548" x2="605" y2="590" stroke-width="4"/>
  <line x1="637" y1="556" x2="639" y2="600" stroke-width="4"/>
  <line x1="670" y1="565" x2="672" y2="609" stroke-width="4"/>
  <line x1="573" y1="578" x2="600" y2="553" stroke-width="4"/>
  <line x1="608" y1="587" x2="634" y2="561" stroke-width="4"/>
  <line x1="642" y1="596" x2="668" y2="569" stroke-width="4"/>
</g>
<polygon fill="#1c1b19" points="434,489.6 452,494 454,546 444.4,544.6"/>
<polygon fill="#171614" points="697.6,520 714.2,522 714.2,630 709.7,631.3 697.6,627"/>

<!-- black area under/between dormers -->
<polygon fill="#080808" points="428,470 582,470 582,522 434,500"/>
<polygon fill="#252421" points="548,512 581,482 714.2,520 714.2,537 697.6,537 639.8,524 560,528"/>
<polygon fill="#060606" points="421.6,399 473.6,360.7 462,392 449,404.7 458.6,410 469.3,496.2 436,479 432.8,486.4"/>
<polygon fill="#060606" points="532,425 582,375 581,408 578.8,487.7 577.4,491.2 560,505 534,510"/>
<g stroke="#1a1917" stroke-width="1.5" fill="none">
<line x1="545" y1="450" x2="565" y2="404"/><line x1="546" y1="465" x2="580" y2="444"/><line x1="548" y1="507" x2="581" y2="482"/>
<line x1="434" y1="420" x2="462" y2="385"/><line x1="437" y1="448" x2="462" y2="432"/><line x1="440" y1="477" x2="463" y2="462"/>
</g>
<!-- left dormer front wall -->
<polygon fill="#3e3934" points="361.5,391 421.6,399 432.8,486.4 378,475.4"/>
<polygon fill="url(#planksD)" points="361.5,391 421.6,399 432.8,486.4 378,475.4"/>
<polygon fill="#000" filter="url(#grain)" opacity="0.15" points="361.5,391 421.6,399 432.8,486.4 378,475.4"/>
<g stroke="#1c1a18" fill="none">
  <polyline points="364,392 378,474 432,485" stroke-width="6"/>
  <line x1="420" y1="400" x2="430" y2="484" stroke-width="5"/>
  <line x1="372" y1="433" x2="425" y2="442" stroke-width="3"/>
</g>
<polygon fill="#1a1816" points="378,472 434,484 437,493 428,491 426,488 420,489 418,486 410,487 407,484 398,483 395,480 388,480 385,477 380,477"/>
<path fill="#1c1a18" d="M382,470 L377,418 Q380,398 396,396 Q412,399 416,417 L420,473 Z"/>
<path fill="#080807" d="M387,464 L382,420 Q385,404 396,403 Q408,405 411,419 L415,467 Z"/>
<g stroke="#2a2724" stroke-width="1.6"><line x1="384" y1="423" x2="411" y2="426"/><line x1="385" y1="434" x2="412" y2="437"/><line x1="386" y1="445" x2="413" y2="448"/><line x1="387" y1="456" x2="414" y2="459"/><line x1="404" y1="405" x2="408" y2="465"/></g>
<!-- left dormer roof edge -->
<polyline points="350.4,385.2 352.2,387.6 421.6,399 473.6,360.7" fill="none" stroke="#1a1714" stroke-width="1.5"/>
<!-- right dormer front wall -->
<polygon fill="#3e3934" points="458.6,410 534,421.7 536.3,509 469.3,496.2"/>
<polygon fill="url(#planksD)" points="458.6,410 534,421.7 536.3,509 469.3,496.2"/>
<polygon fill="#000" filter="url(#grain)" opacity="0.15" points="458.6,410 534,421.7 536.3,509 469.3,496.2"/>
<g stroke="#1c1a18" fill="none">
  <line x1="462" y1="412" x2="472" y2="496" stroke-width="8"/>
  <line x1="530" y1="422" x2="533" y2="508" stroke-width="7"/>
  <line x1="466" y1="459" x2="532" y2="466" stroke-width="4"/>
  <line x1="470" y1="497" x2="536" y2="509" stroke-width="5"/>
</g>
<path fill="#1c1a18" d="M483,490 L481,438 Q484,416 501,415 Q518,418 521,438 L523,494 Z"/>
<path fill="#080807" d="M488,484 L486,440 Q489,423 501,422 Q514,424 516,440 L517,487 Z"/>
<g stroke="#2a2724" stroke-width="1.6"><line x1="487" y1="436" x2="516" y2="439"/><line x1="487" y1="447" x2="516" y2="450"/><line x1="487" y1="458" x2="517" y2="461"/><line x1="487" y1="469" x2="517" y2="472"/><line x1="488" y1="480" x2="517" y2="483"/><line x1="507" y1="424" x2="508" y2="486"/></g>
<!-- right dormer roof -->
<polygon fill="#2a2723" points="538.4,423.8 582,375 581,408"/>
<polygon fill="#433e37" points="500,361 582,374.9 538.4,423.8 449,404.7"/>
<polygon fill="#000" filter="url(#grain)" opacity="0.5" points="500,361 582,374.9 538.4,423.8 449,404.7"/>
<polygon fill="url(#shingleS)" points="500,361 582,374.9 538.4,423.8 449,404.7"/>

<!-- hanging signs -->
<g fill="#1d1c1a">
  <polygon points="771.7,437 851,446 850.7,453 771.7,444"/>
  <polygon points="755.6,493 828.7,510 828,517 755.6,500"/>
</g>
<g stroke="#2a2927" stroke-width="1"><line x1="812.6" y1="447" x2="812.6" y2="455"/><line x1="834.6" y1="450" x2="834.6" y2="457"/><line x1="783" y1="503" x2="783" y2="515"/><line x1="809" y1="509" x2="809" y2="518"/></g>
<path fill="#201f1d" d="M803,454 Q812,458 822,455 Q832,458 842,455 L843,498 Q842,506 832,505 L812,504 Q801,504 800,497 Q801,478 803,470 Z"/>
<path fill="#201f1d" d="M770,514 Q782,520 794,516 Q806,520 818,516 L819,572 Q817,581 806,580 L782,578 Q769,577 767,570 Q768,545 770,530 Z"/>
<g stroke="#000" stroke-opacity="0.25" stroke-width="1"><line x1="808" y1="460" x2="808" y2="502"/><line x1="818" y1="460" x2="818" y2="503"/><line x1="830" y1="460" x2="830" y2="503"/><line x1="778" y1="522" x2="778" y2="576"/><line x1="790" y1="522" x2="790" y2="578"/><line x1="804" y1="522" x2="804" y2="579"/></g>

<!-- finials -->
<g stroke="#141414" fill="none">
<path d="M466.0 109.0L468.0 135.0M464.0 111.0h4M466.0 107.0v2.5" stroke-width="1.7"/>
<path d="M493.0 114.0L494.0 134.0M491.0 116.0h4M493.0 112.0v2.5" stroke-width="1.7"/>
<path d="M556.0 80.0L556.5 96.0M554.0 82.0h4M556.0 78.0v2.5" stroke-width="1.7"/>
<path d="M589.0 76.0L589.0 92.0M587.0 78.0h4M589.0 74.0v2.5" stroke-width="1.7"/>
<path d="M620.0 73.0L620.0 89.0M618.0 75.0h4M620.0 71.0v2.5" stroke-width="1.7"/>
<path d="M650.0 69.0L650.0 87.0M648.0 71.0h4M650.0 67.0v2.5" stroke-width="1.7"/>
<path d="M679.0 65.0L679.0 84.0M677.0 67.0h4M679.0 63.0v2.5" stroke-width="1.7"/>
<path d="M712.0 63.0L712.0 81.0M710.0 65.0h4M712.0 61.0v2.5" stroke-width="1.7"/>
<path d="M750.0 59.0L749.5 78.0M748.0 61.0h4M750.0 57.0v2.5" stroke-width="1.7"/>
<path d="M770.0 76.0L770.0 92.0M768.0 78.0h4M770.0 74.0v2.5" stroke-width="1.7"/>
<path d="M834.0 75.0L831.0 112.0M832.0 77.0h4M834.0 73.0v2.5" stroke-width="1.7"/>
<path d="M842.0 83.0L840.0 116.0M840.0 85.0h4M842.0 81.0v2.5" stroke-width="1.7"/>
</g>

</svg>
<div id="panel">
  <div class="tbar"></div>
  <div class="body"></div>
<div style="position:absolute;left:0;top:0;width:289px;height:252px;overflow:hidden">
  <svg style="position:absolute;left:6px;top:6px" width="10" height="8"><polygon points="0.5,0.5 9.5,0.5 5,7.8" fill="#fff"/></svg>
  <div class="t" style="left:21px;top:6px">Debug</div>
  <div class="fr" style="left:8px;top:27px;width:52px"></div>
  <div class="fr" style="left:64px;top:27px;width:52px"></div>
  <div class="fr" style="left:120px;top:27px;width:54px"></div>
  <div style="position:absolute;left:178px;top:27px;width:17px;height:17px;background:#fff;border:1px solid #1e2c40"></div>
  <div class="t" style="left:16px;top:33px">R:255</div>
  <div class="t" style="left:73px;top:33px">G:255</div>
  <div class="t" style="left:130px;top:33px">B:255</div>
  <div class="t" style="left:201px;top:33px">Clear color</div>
  <div class="fr" style="left:8px;top:50px;width:19px"></div>
  <svg style="position:absolute;left:8px;top:50px" width="19" height="19"><polyline points="3.5,10.5 7.2,14.2 15,6" fill="none" stroke="#4296fa" stroke-width="2.6"/></svg>
  <div class="t" style="left:31px;top:56px">Raytracer mode</div>
  <div class="t" style="left:8px;top:76px">Application average 0.939 ms/frame (1064.7 FPS)</div>
  <div class="fr" style="left:8px;top:90px;width:170px"></div>
  <div style="position:absolute;left:178px;top:90px;width:19px;height:19px;background:rgba(66,150,250,0.4)"></div>
  <svg style="position:absolute;left:182px;top:96px" width="10" height="8"><polygon points="0.5,0.5 9.5,0.5 5,7.8" fill="#fff"/></svg>
  <div class="t" style="left:12px;top:96px">Y</div>
  <div class="t" style="left:201px;top:96px">Up Vector</div>
  <div class="fr" style="left:8px;top:113px;width:60px"></div>
  <div class="fr" style="left:72px;top:113px;width:60px"></div>
  <div class="fr" style="left:136px;top:113px;width:61px"></div>
  <div class="grab" style="left:44px;top:115px;width:10px;height:15px"></div>
  <div class="grab" style="left:109px;top:115px;width:10px;height:15px"></div>
  <div class="grab" style="left:167px;top:115px;width:10px;height:15px"></div>
  <div class="t" style="left:17px;top:119px">10.000</div>
  <div class="t" style="left:81px;top:119px">10.435</div>
  <div class="t" style="left:149px;top:119px">4.681</div>
  <div class="t" style="left:201px;top:119px">Light Dir</div>
  <div class="fr" style="left:8px;top:136px;width:189px"></div>
  <div class="grab" style="left:185px;top:138px;width:10px;height:15px"></div>
  <div class="t" style="left:78px;top:142px">100.000</div>
  <div class="t" style="left:201px;top:142px">Light Intensity</div>
  <svg style="position:absolute;left:8px;top:159px" width="100" height="19">
    <circle cx="9.9" cy="9.9" r="9.3" fill="rgba(41,74,122,0.54)"/><circle cx="9.9" cy="9.9" r="6" fill="#4296fa"/>
    <circle cx="75.9" cy="9.9" r="9.3" fill="rgba(41,74,122,0.54)"/>
  </svg>
  <div class="t" style="left:31px;top:165px">Point</div>
  <div class="t" style="left:98px;top:165px">Infinite</div>
</div>
  <svg style="position:absolute;left:275px;top:235px" width="17" height="17"><polygon points="0,17 17,17 17,0" fill="rgba(66,150,250,0.2)"/></svg>
</div>
<div id="titlebar">
  <svg class="tb" style="left:9px;top:9px" width="15" height="12">
    <defs><linearGradient id="icg" x1="0" y1="0" x2="0.6" y2="1"><stop offset="0" stop-color="#5a86c8"/><stop offset="0.5" stop-color="#3f9a8a"/><stop offset="1" stop-color="#4cb45a"/></linearGradient></defs>
    <rect x="0" y="0" width="15" height="12" fill="#eeeeee"/>
    <rect x="2" y="2" width="5" height="8" fill="url(#icg)"/>
    <rect x="9" y="2" width="2" height="8" fill="#dedede"/>
    <rect x="12" y="2" width="2" height="5" fill="url(#icg)"/>
  </svg>
  <div id="title">NVIDIA Vulkan Raytracing Tutorial</div><div id="title2">FPS = 1079.00</div>
  <div class="tb" style="left:1162px;top:15px;width:10px;height:1px;background:#fff"></div>
  <div class="tb" style="left:1207px;top:10px;width:8px;height:8px;border:1px solid #fff"></div>
  <svg class="tb" style="left:1252px;top:9px" width="12" height="12"><path d="M1,1 L11,11 M11,1 L1,11" stroke="#fff" stroke-width="1.1"/></svg>
</div>
<div id="border"></div>
</body></html>
